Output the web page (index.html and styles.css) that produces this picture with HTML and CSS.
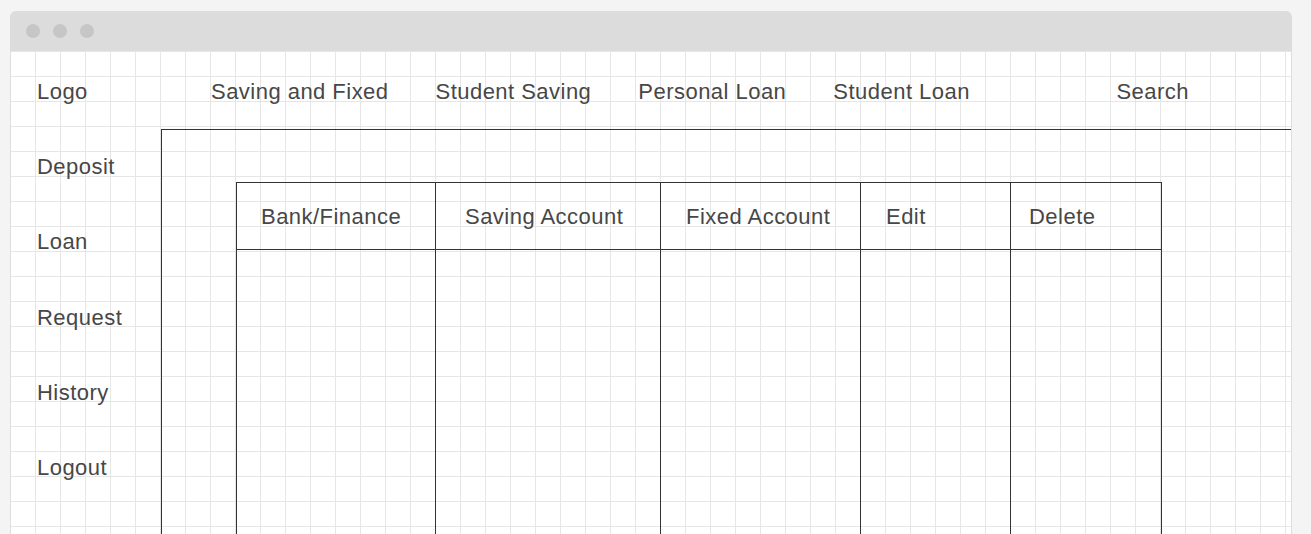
FILE: index.html
```html
<!DOCTYPE html>
<html>
<head>
<meta charset="utf-8">
<link rel="stylesheet" href="styles.css">
</head>
<body>
<div class="window">
  <div class="titlebar">
    <span class="dot"></span><span class="dot"></span><span class="dot"></span>
  </div>
  <div class="content">
    <ul class="sidebar">
      <li>Logo</li>
      <li>Deposit</li>
      <li>Loan</li>
      <li>Request</li>
      <li>History</li>
      <li>Logout</li>
    </ul>
    <div class="right">
      <nav class="nav">
        <span>Saving and Fixed</span>
        <span>Student Saving</span>
        <span>Personal Loan</span>
        <span>Student Loan</span>
        <span class="search">Search</span>
      </nav>
      <div class="mainbox">
        <div class="table">
          <div class="th c1">Bank/Finance</div>
          <div class="th c2">Saving Account</div>
          <div class="th c3">Fixed Account</div>
          <div class="th c4">Edit</div>
          <div class="th c5">Delete</div>
          <div class="td"></div>
          <div class="td"></div>
          <div class="td"></div>
          <div class="td"></div>
          <div class="td"></div>
        </div>
      </div>
    </div>
  </div>
</div>
</body>
</html>
```

FILE: styles.css
```css
* { box-sizing: border-box; }
html, body { margin: 0; padding: 0; }
body {
  background: #f4f4f4;
  font-family: "Liberation Sans", Arial, sans-serif;
  color: #474747;
  font-size: 22px;
  letter-spacing: 0.47px;
  overflow: hidden;
  height: 534px;
}
.window {
  margin: 11px 0 0 10px;
  width: 1282px;
}
.titlebar {
  height: 40px;
  background: #dcdcdc;
  border-radius: 6px 6px 0 0;
  display: flex;
  align-items: center;
  gap: 13px;
  padding-left: 16px;
  padding-bottom: 1px;
}
.dot {
  width: 14px;
  height: 14px;
  border-radius: 50%;
  background: #c6c6c6;
}
.content {
  display: grid;
  grid-template-columns: 150px 1fr;
  background-color: #fff;
  border-left: 1px solid #dedede;
  border-right: 1px solid #dedede;
  background-image:
    linear-gradient(to right, #e6e6e6 1px, transparent 1px),
    linear-gradient(to bottom, #e6e6e6 1px, transparent 1px);
  background-size: 25px 25px;
  background-position: -1px 0;
  height: 600px;
}
.sidebar {
  list-style: none;
  margin: 0;
  padding: 3px 0 0 26px;
}
.sidebar li {
  height: 75.2px;
  line-height: 75.2px;
}
.right {
  display: flex;
  flex-direction: column;
}
.nav {
  height: 78px;
  display: flex;
  align-items: center;
  gap: 47px;
  padding: 4px 102px 0 50px;
}
.nav .search { margin-left: auto; }
.mainbox {
  flex: 1;
  border-top: 1px solid #333;
  border-left: 1px solid #333;
  padding: 52px 0 0 74px;
}
.table {
  display: grid;
  grid-template-columns: 199px 225px 200px 150px 151px;
  grid-template-rows: 67px 300px;
  width: 926px;
  border-top: 1px solid #333;
  border-left: 1px solid #333;
}
.th, .td {
  border-right: 1px solid #333;
  border-bottom: 1px solid #333;
}
.th {
  display: flex;
  align-items: center;
  padding-left: 24px;
  padding-top: 2px;
}
.th.c2 { padding-left: 29px; }
.th.c3 { padding-left: 25px; }
.th.c4 { padding-left: 25px; }
.th.c5 { padding-left: 18px; }
```
